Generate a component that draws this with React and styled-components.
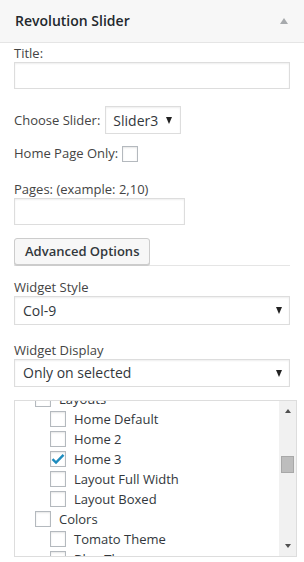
import React from "react";
import styled, { createGlobalStyle } from "styled-components";

const Global = createGlobalStyle`
  html, body { margin: 0; padding: 0; background: #fff; }
  body {
    font-family: "Open Sans", "Noto Sans", sans-serif;
    font-size: 13px;
    color: #444;
  }
  * { box-sizing: border-box; }
`;

const Widget = styled.div`
  width: 304px;
  height: 562px;
  overflow: hidden;
  background: #fff;
`;

const Header = styled.div`
  height: 43px;
  padding: 0 16px 0 15px;
  background: #f7f7f7;
  border-bottom: 1px solid #e5e5e5;
  display: flex;
  align-items: center;
  justify-content: space-between;
`;

const HeaderTitle = styled.h3`
  margin: 0;
  font-size: 14px;
  font-weight: 600;
  color: #23282d;
  line-height: 18px;
  margin-top: -1px;
`;

const ToggleArrow = styled.span`
  width: 0;
  height: 0;
  border-left: 4px solid transparent;
  border-right: 4px solid transparent;
  border-bottom: 6px solid #a7aaad;
  margin-top: -1px;
`;

const Body = styled.div`
  padding: 0 14px;
`;

const Field = styled.div`
  margin-top: ${(p) => p.$mt || 0}px;
`;

const Label = styled.div`
  line-height: 17px;
  color: #444;
`;

const TextInput = styled.div`
  width: ${(p) => (p.$w ? `${p.$w}px` : "100%")};
  height: 27px;
  border: 1px solid #ddd;
  box-shadow: inset 0 1px 2px rgba(0, 0, 0, 0.07);
  background: #fff;
`;

const InlineRow = styled.div`
  display: flex;
  align-items: ${(p) => p.$align || "center"};
  gap: ${(p) => p.$gap || 5}px;
  margin-top: ${(p) => p.$mt || 0}px;
  line-height: 18px;
`;

const SelectBox = styled.div`
  width: ${(p) => (p.$w ? `${p.$w}px` : "100%")};
  height: ${(p) => p.$h || 28}px;
  border: 1px solid #ddd;
  box-shadow: inset 0 1px 2px rgba(0, 0, 0, 0.07);
  background: #fff;
  display: flex;
  align-items: center;
  justify-content: space-between;
  padding: 0 ${(p) => p.$pr || 7}px 0 ${(p) => p.$pl || 7}px;
  font-size: 14px;
  color: #32373c;
`;

const SelectValue = styled.span`
  line-height: 18px;
  margin-top: ${(p) => p.$dy || 0}px;
`;

const Caret = styled.span`
  width: 0;
  height: 0;
  border-left: 3.5px solid transparent;
  border-right: 3.5px solid transparent;
  border-top: 7px solid #222;
`;

const Checkbox = styled.span`
  flex: none;
  width: 16px;
  height: 16px;
  border: 1px solid #b4b9be;
  background: #fff;
  box-shadow: inset 0 1px 2px rgba(0, 0, 0, 0.1);
  display: inline-flex;
  align-items: center;
  justify-content: center;
`;

const ButtonBar = styled.div`
  margin-top: 13px;
  border-bottom: 1px solid #e5e5e5;
  height: 28px;
`;

const Button = styled.button`
  height: 27px;
  padding: 0 10px;
  border: 1px solid #ccc;
  border-radius: 3px;
  background: #f7f7f7;
  box-shadow: 0 1px 0 #ccc;
  font-family: "Open Sans", "Noto Sans", sans-serif;
  font-size: 13px;
  font-weight: 600;
  color: #32373c;
  line-height: 25px;
  cursor: pointer;
`;

const ListBox = styled.div`
  margin-top: 13px;
  margin-right: -7px;
  height: 157px;
  border: 1px solid #ddd;
  display: flex;
  overflow: hidden;
`;

const ListViewport = styled.div`
  flex: 1;
  overflow: hidden;
  padding-left: 20px;
`;

const ListInner = styled.ul`
  list-style: none;
  margin: -12px 0 0;
  padding: 0;
`;

const Item = styled.li`
  display: flex;
  align-items: center;
  gap: 8px;
  height: 20px;
  padding-left: ${(p) => (p.$child ? 15 : 0)}px;
  color: #32373c;
  line-height: 20px;
  white-space: nowrap;
`;

const Scrollbar = styled.div`
  flex: none;
  width: 17px;
  background: #f1f1f1;
  display: flex;
  flex-direction: column;
  align-items: center;
  justify-content: space-between;
  padding: 8px 0 8px;
`;

const ScrollArrow = styled.span`
  width: 0;
  height: 0;
  border-left: 3.5px solid transparent;
  border-right: 3.5px solid transparent;
  ${(p) =>
    p.$up
      ? "border-bottom: 4px solid #505050;"
      : "border-top: 4px solid #505050;"}
`;

const ScrollTrack = styled.div`
  flex: 1;
  width: 100%;
  padding: 0 2px;
  padding-top: ${(p) => p.$offset}px;
`;

const Thumb = styled.div`
  height: 17px;
  width: 100%;
  background: #bdbdbd;
  border: 1px solid #a8a8a8;
`;

const Check = () => (
  <svg width="14" height="12" viewBox="0 0 14 12" aria-hidden="true">
    <path d="M1.5 6.2 L5 9.6 L12.5 1.8" fill="none" stroke="#1e8cbe" strokeWidth="2.4" />
  </svg>
);

const items = [
  { label: "Layouts" },
  { label: "Home Default", child: true },
  { label: "Home 2", child: true },
  { label: "Home 3", child: true, checked: true },
  { label: "Layout Full Width", child: true },
  { label: "Layout Boxed", child: true },
  { label: "Colors" },
  { label: "Tomato Theme", child: true },
  { label: "Blue Theme", child: true },
];

export default function App() {
  return (
    <>
      <Global />
      <Widget>
        <Header>
          <HeaderTitle>Revolution Slider</HeaderTitle>
          <ToggleArrow />
        </Header>
        <Body>
          <Field $mt={2}>
            <Label>Title:</Label>
            <TextInput />
          </Field>

          <InlineRow $mt={17} $gap={5}>
            <Label as="span">Choose Slider:</Label>
            <SelectBox $w={76} $pl={7} $pr={8}>
              <SelectValue $dy={1}>Slider3</SelectValue>
              <Caret />
            </SelectBox>
          </InlineRow>

          <InlineRow $mt={11} $gap={4}>
            <Label as="span">Home Page Only:</Label>
            <Checkbox />
          </InlineRow>

          <Field $mt={19}>
            <Label>Pages: (example: 2,10)</Label>
            <TextInput $w={171} />
          </Field>

          <ButtonBar>
            <Button type="button">Advanced Options</Button>
          </ButtonBar>

          <Field $mt={13}>
            <Label>Widget Style</Label>
            <SelectBox $h={29} $pl={8} $pr={7}>
              <SelectValue>Col-9</SelectValue>
              <Caret />
            </SelectBox>
          </Field>

          <Field $mt={17}>
            <Label>Widget Display</Label>
            <SelectBox $h={28} $pl={8} $pr={7}>
              <SelectValue>Only on selected</SelectValue>
              <Caret />
            </SelectBox>
          </Field>

          <ListBox>
            <ListViewport>
              <ListInner>
                {items.map((it) => (
                  <Item key={it.label} $child={it.child}>
                    <Checkbox>{it.checked && <Check />}</Checkbox>
                    <span>{it.label}</span>
                  </Item>
                ))}
              </ListInner>
            </ListViewport>
            <Scrollbar>
              <ScrollArrow $up />
              <ScrollTrack $offset={43}>
                <Thumb />
              </ScrollTrack>
              <ScrollArrow />
            </Scrollbar>
          </ListBox>
        </Body>
      </Widget>
    </>
  );
}
